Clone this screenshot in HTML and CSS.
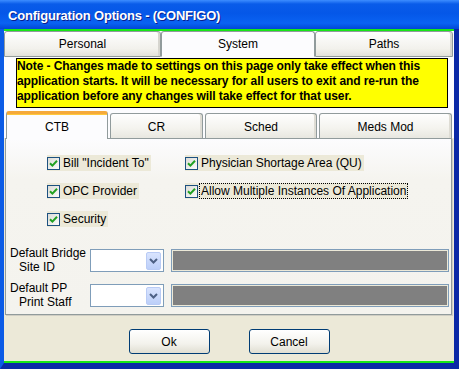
FILE: index.html
```html
<!DOCTYPE html>
<html lang="en">
<head>
  <meta charset="UTF-8">
  <title>Configuration Options</title>
  <link rel="stylesheet" href="styles.css">
</head>
<body>
  <div class="window">
    <div class="titlebar">Configuration Options - (CONFIGO)</div>

    <div class="frame">
      <div class="client">
        <!-- Top tab strip -->
        <div class="tabs">
          <div class="tab tab-personal">Personal</div>
          <div class="tab tab-system active">System</div>
          <div class="tab tab-paths">Paths</div>
        </div>

        <div class="note-area">
          <div class="note">
            Note - Changes made to settings on this page only take effect when this<br>
            application starts. It will be necessary for all users to exit and re-run the<br>
            application before any changes will take effect for that user.
          </div>
        </div>

        <!-- Inner tab strip -->
        <div class="subtabs">
          <div class="subtab sub-ctb active">CTB</div>
          <div class="subtab sub-cr">CR</div>
          <div class="subtab sub-sched">Sched</div>
          <div class="subtab sub-meds">Meds Mod</div>
        </div>

        <div class="panel">
          <div class="checks">
            <div class="check">
              <span class="box"><svg width="9" height="9" viewBox="0 0 9 9"><path d="M1 4.2 L3.4 6.6 L8 1.8" fill="none" stroke="#21a121" stroke-width="2"/></svg></span>
              <span class="check-text">Bill "Incident To"</span>
            </div>
            <div class="check">
              <span class="box"><svg width="9" height="9" viewBox="0 0 9 9"><path d="M1 4.2 L3.4 6.6 L8 1.8" fill="none" stroke="#21a121" stroke-width="2"/></svg></span>
              <span class="check-text">Physician Shortage Area (QU)</span>
            </div>
            <div class="check">
              <span class="box"><svg width="9" height="9" viewBox="0 0 9 9"><path d="M1 4.2 L3.4 6.6 L8 1.8" fill="none" stroke="#21a121" stroke-width="2"/></svg></span>
              <span class="check-text">OPC Provider</span>
            </div>
            <div class="check">
              <span class="box"><svg width="9" height="9" viewBox="0 0 9 9"><path d="M1 4.2 L3.4 6.6 L8 1.8" fill="none" stroke="#21a121" stroke-width="2"/></svg></span>
              <span class="check-text focused">Allow Multiple Instances Of Application</span>
            </div>
            <div class="check">
              <span class="box"><svg width="9" height="9" viewBox="0 0 9 9"><path d="M1 4.2 L3.4 6.6 L8 1.8" fill="none" stroke="#21a121" stroke-width="2"/></svg></span>
              <span class="check-text">Security</span>
            </div>
          </div>

          <div class="fields">
            <div class="field-row">
              <div class="field-label">Default Bridge<br><span class="indent">Site ID</span></div>
              <div class="combo">
                <span class="combo-btn"><svg width="13" height="16" viewBox="0 0 13 16"><path d="M3 6 L6.5 9.5 L10 6" fill="none" stroke="#4d6185" stroke-width="2"/></svg></span>
              </div>
              <div class="readonly"></div>
            </div>
            <div class="field-row">
              <div class="field-label">Default PP<br><span class="indent">Print Staff</span></div>
              <div class="combo">
                <span class="combo-btn"><svg width="13" height="16" viewBox="0 0 13 16"><path d="M3 6 L6.5 9.5 L10 6" fill="none" stroke="#4d6185" stroke-width="2"/></svg></span>
              </div>
              <div class="readonly"></div>
            </div>
          </div>
        </div>

        <div class="buttons">
          <button class="btn">Ok</button>
          <button class="btn">Cancel</button>
        </div>
      </div>
    </div>
  </div>
</body>
</html>
```

FILE: styles.css
```css
body {
  margin: 0;
  padding: 0;
  width: 459px;
  height: 369px;
  overflow: hidden;
  font-family: "Liberation Sans", Arial, sans-serif;
  font-size: 12px;
  color: #000;
}

.window {
  height: 369px;
  display: flex;
  flex-direction: column;
}

.titlebar {
  height: 29px;
  flex: none;
  display: flex;
  align-items: center;
  padding-left: 8px;
  padding-top: 2px;
  box-sizing: border-box;
  color: #fff;
  font-weight: bold;
  font-size: 13px;
  letter-spacing: -0.2px;
  text-shadow: 1px 1px 0 #0a1e8c;
  background: linear-gradient(#3d8dff 0, #0a5ce9 4px, #0557e8 45%, #0a62f2 80%, #0047d6 100%);
}

.frame {
  flex: 1;
  display: flex;
  border-left: 4px solid #0b5be6;
  border-right: 6px solid #0a28a6;
  border-bottom: 6px solid #0a28a6;
}

.client {
  flex: 1;
  display: flex;
  flex-direction: column;
  background-color: #ece9d8;
  border-top: 2px solid #17e617;
  border-bottom: 2px solid #17e617;
}

/* top tabs */
.tabs {
  height: 26px;
  display: flex;
  background-color: #fcfcfe;
}

.tab {
  box-sizing: border-box;
  display: flex;
  align-items: center;
  justify-content: center;
  border: 1px solid #919b9c;
  border-radius: 3px 3px 0 0;
  background: linear-gradient(#fefefe, #f2f1ec 70%, #e3e2da);
  box-shadow: inset -2px 0 0 #d6d5cf;
}

.tab-personal { width: 157px; }
.tab-system { width: 154px; }
.tab-paths { width: 138px; }

.tab.active {
  background: #fcfcfe;
  border-bottom-color: #fcfcfe;
  box-shadow: none;
}

.note-area {
  height: 54px;
  box-sizing: border-box;
  padding: 1px 0 0 12px;
  background-color: #fcfcfe;
}

.note {
  width: 432px;
  height: 50px;
  box-sizing: border-box;
  border: 1px solid #000;
  background-color: #ffff00;
  font-weight: bold;
  font-size: 12px;
  line-height: 15px;
  letter-spacing: -0.1px;
  padding-left: 0;
}

/* inner tabs */
.subtabs {
  height: 27px;
  display: flex;
  align-items: flex-end;
  padding-left: 2px;
  background-color: #fcfcfe;
}

.subtab {
  height: 25px;
  box-sizing: border-box;
  display: flex;
  align-items: center;
  justify-content: center;
  padding-top: 2px;
  margin-right: 2px;
  border: 1px solid #919b9c;
  border-bottom: none;
  border-radius: 3px 3px 0 0;
  background: linear-gradient(#fefefe, #f4f3ee 60%, #e8e7e0);
  box-shadow: inset -2px 0 0 #dedcd4;
}

.sub-ctb { width: 102px; }
.sub-cr { width: 93px; }
.sub-sched { width: 112px; }
.sub-meds { width: 133px; }

.subtab.active {
  height: 28px;
  margin-bottom: -1px;
  padding-top: 0;
  background: #fcfcfe;
  border-top: 3px solid #f5a93a;
  box-shadow: inset 0 1px 0 #ffc83c;
  position: relative;
  z-index: 1;
}

.panel {
  height: 177px;
  width: 447px;
  box-sizing: border-box;
  margin-left: 1px;
  border: 1px solid #919b9c;
  background: linear-gradient(#fcfcfe, #f5f4ef 40px, #f4f3ee);
  box-shadow: 1px 1px 0 #d0cec4;
  display: flex;
  flex-direction: column;
  padding: 16px 0 0 41px;
}

.checks {
  display: grid;
  grid-template-columns: 138px auto;
  row-gap: 12px;
  justify-items: start;
}

.check {
  display: flex;
  align-items: center;
  height: 16px;
  background-color: #ece9d8;
}

.box {
  width: 13px;
  height: 13px;
  box-sizing: border-box;
  border: 1px solid #1c5180;
  background: linear-gradient(135deg, #dcdcd7, #fbfbf9);
  display: flex;
  align-items: center;
  justify-content: center;
  margin-right: 1px;
}

.check-text {
  border: 1px dotted transparent;
  padding: 0 1px;
  line-height: 14px;
}

.check-text.focused {
  border-color: #000;
}

.fields {
  margin: 22px 0 0 -37px;
  display: flex;
  flex-direction: column;
  gap: 12px;
}

.field-row {
  display: flex;
  align-items: flex-start;
  height: 23px;
}

.field-label {
  width: 80px;
  line-height: 13.5px;
  margin-top: -2px;
}

.indent {
  padding-left: 9px;
}

.combo {
  width: 74px;
  height: 23px;
  box-sizing: border-box;
  border: 1px solid #7f9db9;
  background-color: #fff;
  display: flex;
  justify-content: flex-end;
  padding: 2px 2px 1px 0;
  margin-right: 7px;
}

.combo-btn {
  width: 15px;
  height: 18px;
  box-sizing: border-box;
  border: 1px solid #b9cbf5;
  border-radius: 2px;
  background: linear-gradient(#d9e4fe, #bccff9);
  display: flex;
  align-items: center;
  justify-content: center;
}

.readonly {
  width: 278px;
  height: 23px;
  box-sizing: border-box;
  border: 1px solid #7f9db9;
  background-color: #808080;
  box-shadow: inset 0 0 0 1px #ece9d8;
}

.buttons {
  flex: 1;
  display: flex;
  justify-content: center;
  gap: 39px;
  padding-top: 14px;
}

.btn {
  width: 81px;
  height: 25px;
  box-sizing: border-box;
  border: 1px solid #003c74;
  border-radius: 3px;
  background: linear-gradient(#ffffff, #f3f2ec 60%, #e0ded2);
  font-family: "Liberation Sans", Arial, sans-serif;
  font-size: 12px;
  color: #000;
  padding: 0;
}
```
